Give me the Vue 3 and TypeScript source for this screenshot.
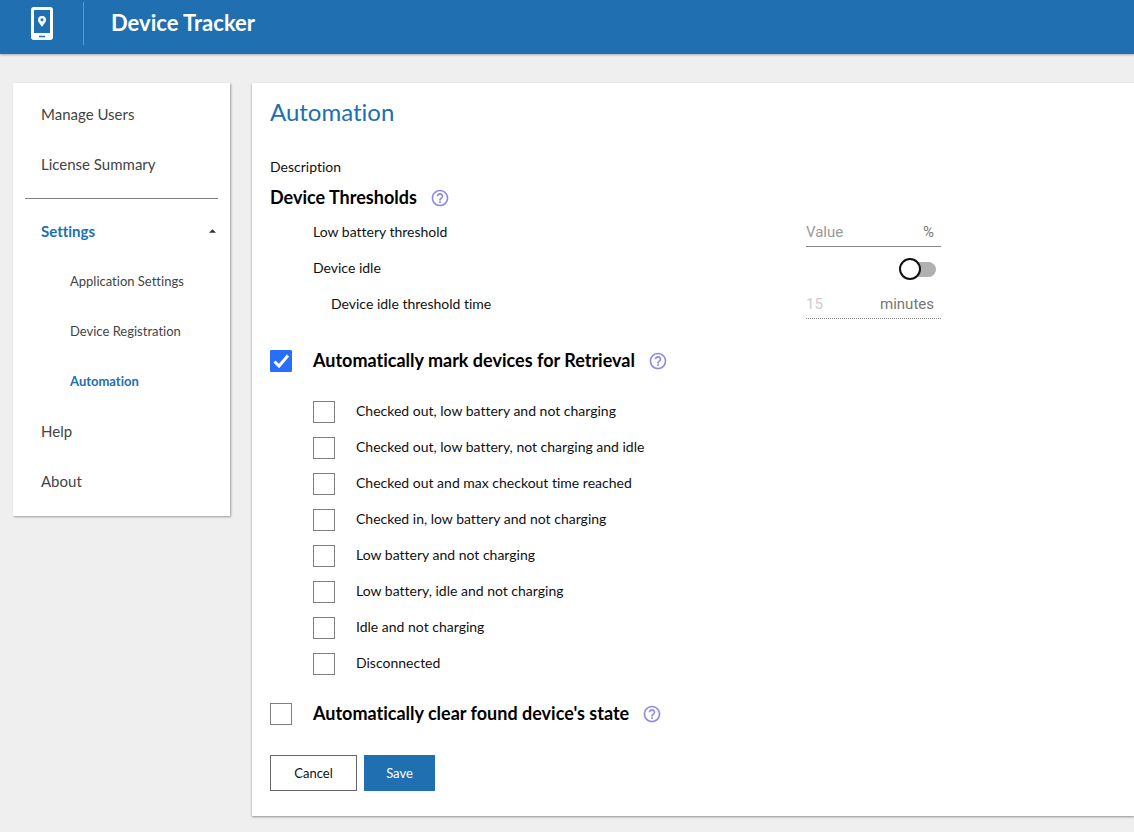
<script setup lang="ts">
import { ref } from 'vue'

interface Rule {
  id: string
  label: string
  checked: boolean
}

const settingsLinks = [
  { label: 'Application Settings', active: false },
  { label: 'Device Registration', active: false },
  { label: 'Automation', active: true },
]

const lowBattery = ref('')
const deviceIdle = ref(false)
const idleTime = ref('15')
const markRetrieval = ref(true)
const clearFound = ref(false)

const rules = ref<Rule[]>([
  { id: 'out-low', label: 'Checked out, low battery and not charging', checked: false },
  { id: 'out-low-idle', label: 'Checked out, low battery, not charging and idle', checked: false },
  { id: 'out-max', label: 'Checked out and max checkout time reached', checked: false },
  { id: 'in-low', label: 'Checked in, low battery and not charging', checked: false },
  { id: 'low', label: 'Low battery and not charging', checked: false },
  { id: 'low-idle', label: 'Low battery, idle and not charging', checked: false },
  { id: 'idle', label: 'Idle and not charging', checked: false },
  { id: 'disconnected', label: 'Disconnected', checked: false },
])
</script>

<template>
  <div class="page">
    <header class="topbar">
      <svg class="logo" viewBox="0 0 24 35" aria-hidden="true">
        <path
          fill="#fff"
          fill-rule="evenodd"
          d="M4 1h16a3 3 0 0 1 3 3v27a3 3 0 0 1-3 3H4a3 3 0 0 1-3-3V4a3 3 0 0 1 3-3zM4 4v23h16V4zM9 29.700v1.500h6v-1.500z"
        />
        <path
          fill="#fff"
          fill-rule="evenodd"
          d="M12 10a4 4 0 0 1 4 4c0 2.500-2.500 4-4 7-1.500-3-4-4.500-4-7a4 4 0 0 1 4-4zM12 12.300a1.500 1.500 0 1 0 0 3 1.500 1.500 0 0 0 0-3z"
        />
      </svg>
      <span class="brand">Device Tracker</span>
    </header>

    <div class="body">
      <nav class="sidebar" aria-label="Main">
        <a class="item" href="#">Manage Users</a>
        <a class="item" href="#">License Summary</a>
        <hr />
        <button class="item group" type="button" aria-expanded="true">
          Settings
          <svg class="caret" viewBox="0 0 8 4" aria-hidden="true"><path d="M0 4 4 0l4 4z" fill="#333" /></svg>
        </button>
        <a
          v-for="link in settingsLinks"
          :key="link.label"
          class="item sub"
          :class="{ active: link.active }"
          href="#"
        >{{ link.label }}</a>
        <a class="item" href="#">Help</a>
        <a class="item" href="#">About</a>
      </nav>

      <main class="panel">
        <h1>Automation</h1>
        <p class="description">Description</p>

        <div class="section-title thresholds">
          <h2>Device Thresholds</h2>
          <button class="help" type="button" aria-label="About device thresholds">
            <svg viewBox="0 0 24 24" aria-hidden="true">
              <path d="M11 18h2v-2h-2v2zm1-16C6.480 2 2 6.480 2 12s4.480 10 10 10 10-4.480 10-10S17.520 2 12 2zm0 18c-4.410 0-8-3.590-8-8s3.590-8 8-8 8 3.590 8 8-3.590 8-8 8zm0-14c-2.210 0-4 1.790-4 4h2c0-1.100.9-2 2-2s2 .9 2 2c0 2-3 1.750-3 5h2c0-2.250 3-2.500 3-5 0-2.210-1.790-4-4-4z" />
            </svg>
          </button>
        </div>

        <div class="setting">
          <label for="low-battery">Low battery threshold</label>
          <span class="field">
            <input id="low-battery" v-model="lowBattery" type="text" placeholder="Value" />
            <span class="unit">%</span>
          </span>
        </div>
        <div class="setting">
          <label for="device-idle">Device idle</label>
          <input id="device-idle" v-model="deviceIdle" class="switch" type="checkbox" role="switch" />
        </div>
        <div class="setting nested">
          <label for="idle-time">Device idle threshold time</label>
          <span class="field disabled">
            <input id="idle-time" v-model="idleTime" type="text" :disabled="!deviceIdle" />
            <span class="unit">minutes</span>
          </span>
        </div>

        <div class="section-title option">
          <span class="check">
            <input id="mark" v-model="markRetrieval" type="checkbox" />
            <svg v-if="markRetrieval" viewBox="0 0 22 22" aria-hidden="true">
              <path d="M4.500 11.500l4.500 4.500L18 5.500" fill="none" stroke="#fff" stroke-width="3" />
            </svg>
          </span>
          <h2><label for="mark">Automatically mark devices for Retrieval</label></h2>
          <button class="help" type="button" aria-label="About automatic retrieval">
            <svg viewBox="0 0 24 24" aria-hidden="true">
              <path d="M11 18h2v-2h-2v2zm1-16C6.480 2 2 6.480 2 12s4.480 10 10 10 10-4.480 10-10S17.520 2 12 2zm0 18c-4.410 0-8-3.590-8-8s3.590-8 8-8 8 3.590 8 8-3.590 8-8 8zm0-14c-2.210 0-4 1.790-4 4h2c0-1.100.9-2 2-2s2 .9 2 2c0 2-3 1.750-3 5h2c0-2.250 3-2.500 3-5 0-2.210-1.790-4-4-4z" />
            </svg>
          </button>
        </div>

        <ul class="rules">
          <li v-for="rule in rules" :key="rule.id">
            <span class="check"><input :id="rule.id" v-model="rule.checked" type="checkbox" /></span>
            <label :for="rule.id">{{ rule.label }}</label>
          </li>
        </ul>

        <div class="section-title option clear">
          <span class="check"><input id="clear" v-model="clearFound" type="checkbox" /></span>
          <h2><label for="clear">Automatically clear found device's state</label></h2>
          <button class="help" type="button" aria-label="About clearing found state">
            <svg viewBox="0 0 24 24" aria-hidden="true">
              <path d="M11 18h2v-2h-2v2zm1-16C6.480 2 2 6.480 2 12s4.480 10 10 10 10-4.480 10-10S17.520 2 12 2zm0 18c-4.410 0-8-3.590-8-8s3.590-8 8-8 8 3.590 8 8-3.590 8-8 8zm0-14c-2.210 0-4 1.790-4 4h2c0-1.100.9-2 2-2s2 .9 2 2c0 2-3 1.750-3 5h2c0-2.250 3-2.500 3-5 0-2.210-1.790-4-4-4z" />
            </svg>
          </button>
        </div>

        <div class="actions">
          <button class="btn" type="button">Cancel</button>
          <button class="btn primary" type="button">Save</button>
        </div>
      </main>
    </div>
  </div>
</template>

<style>
body {
  margin: 0;
  background: #efefef;
}
</style>

<style scoped>
.page,
.page * {
  box-sizing: border-box;
}
.page {
  min-height: 100vh;
  background: #efefef;
  color: #111;
  font: 14px/20px Lato, sans-serif;
  font-variant-ligatures: none;
}
button,
input {
  margin: 0;
  font: inherit;
  font-variant-ligatures: none;
}
h1,
h2,
p,
ul {
  margin: 0;
  padding: 0;
}
.topbar {
  display: flex;
  align-items: flex-start;
  height: 54px;
  padding: 2px 30px;
  background: #206fb0;
  box-shadow: 0 1px 2px rgba(0, 0, 0, 0.3);
}
.logo {
  width: 24px;
  height: 35px;
  margin: 4px 29px 0 0;
}
.brand {
  height: 43px;
  padding-left: 27px;
  border-left: 1px solid #5c98c9;
  color: #fff;
  font-size: 22px;
  font-weight: 700;
  line-height: 42px;
}
.body {
  display: flex;
  align-items: flex-start;
  gap: 22px;
  padding: 29px 0 16px 13px;
}
.sidebar {
  flex: 0 0 217px;
  padding: 6px 0 10px;
  background: #fff;
  box-shadow: 1px 1px 2px rgba(0, 0, 0, 0.35);
}
.item {
  display: flex;
  align-items: center;
  height: 50px;
  padding: 0 14px 0 28px;
  color: #444;
  font-size: 15px;
  text-decoration: none;
}
.sidebar hr {
  height: 1px;
  margin: 9px 12px 6px;
  border: 0;
  background: #808080;
}
.group {
  justify-content: space-between;
  width: 100%;
  height: 51px;
  border: 0;
  background: none;
  color: #206fb0;
  font-weight: 700;
}
.caret {
  width: 7px;
  height: 4px;
}
.sub {
  padding-left: 57px;
  font-size: 13px;
}
.active {
  color: #206fb0;
  font-weight: 700;
}
.panel {
  flex: 1;
  min-width: 0;
  padding: 9px 18px 25px;
  background: #fff;
  box-shadow: 0 1px 2px rgba(0, 0, 0, 0.4);
}
h1 {
  color: #206fb0;
  font-size: 24px;
  font-weight: 400;
  line-height: 40px;
}
.description {
  margin-top: 25px;
}
.section-title {
  display: flex;
  align-items: center;
}
h2 {
  color: #000;
  font-size: 18px;
  font-weight: 700;
  line-height: 30px;
}
.thresholds {
  margin: 5px 0 2px;
}
.help {
  display: flex;
  margin-left: 13px;
  padding: 2px 0 0;
  border: 0;
  background: none;
}
.help svg {
  width: 20px;
  height: 20px;
  fill: #8c8ce6;
}
.setting {
  display: flex;
  align-items: center;
  justify-content: space-between;
  max-width: 671px;
  height: 36px;
  padding-left: 43px;
}
.nested {
  padding-left: 61px;
}
.field {
  display: flex;
  align-items: center;
  width: 135px;
  height: 30px;
  border-bottom: 1px solid #888;
  color: #777;
  font-family: Roboto, sans-serif;
  font-size: 15px;
}
.field input {
  flex: 1;
  min-width: 0;
  padding: 0;
  border: 0;
  background: none;
  color: #555;
  outline: 0;
}
.field input::placeholder {
  color: #999;
  opacity: 1;
}
.field.disabled {
  border-bottom-style: dotted;
}
.field input:disabled {
  color: #ccc;
}
.unit {
  padding-right: 7px;
}
.switch {
  position: relative;
  width: 31px;
  height: 15px;
  margin: 2px 5px 0 0;
  border-radius: 8px;
  background: #b0b0b0;
  appearance: none;
}
.switch::before {
  position: absolute;
  top: -4px;
  left: -6px;
  box-sizing: border-box;
  width: 22px;
  height: 22px;
  border: 2px solid #111;
  border-radius: 50%;
  background: #fff;
  content: '';
}
.switch:checked::before {
  left: 15px;
}
.option {
  height: 36px;
  margin-top: 20px;
}
.check {
  position: relative;
  display: flex;
  flex: none;
  width: 22px;
  height: 22px;
  margin: 2px 21px 0 0;
}
.check input {
  width: 22px;
  height: 22px;
  border: 1px solid #808080;
  background: #fff;
  appearance: none;
}
.check input:checked {
  border-color: #286efa;
  border-radius: 1px;
  background: #286efa;
}
.check svg {
  position: absolute;
  inset: 0;
  pointer-events: none;
}
.rules {
  margin-top: 15px;
  padding-left: 43px;
  list-style: none;
}
.rules li {
  display: flex;
  align-items: center;
  height: 36px;
}
.clear {
  margin-top: 14px;
}
.actions {
  display: flex;
  gap: 7px;
  margin-top: 24px;
}
.btn {
  min-width: 87px;
  height: 36px;
  padding: 0 20px;
  border: 1px solid #666;
  background: #fff;
  color: #111;
  font-size: 13px;
}
.primary {
  min-width: 71px;
  border-color: #206fb0;
  background: #206fb0;
  color: #fff;
}
</style>
